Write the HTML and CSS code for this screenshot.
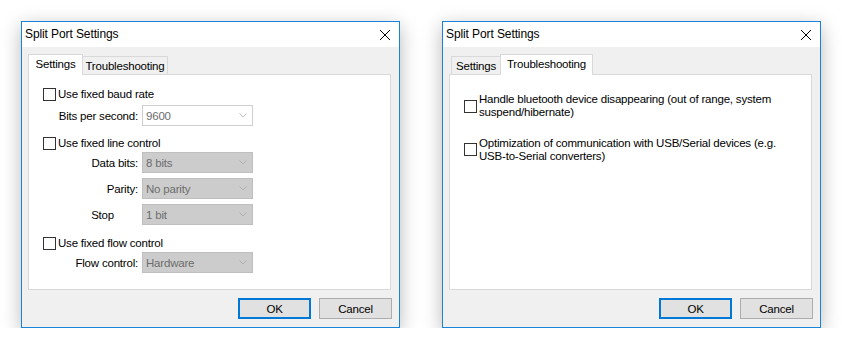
FILE: index.html
```html
<!DOCTYPE html>
<html lang="en">
<head>
    <meta charset="UTF-8">
    <title>Split Port Settings</title>
    <link rel="stylesheet" href="styles.css">
</head>
<body>
    <div class="desk">
        <div class="dialog">
            <div class="titlebar">
                <span class="title">Split Port Settings</span>
                <svg class="close" width="10" height="10" viewBox="0 0 10 10"><path d="M0 0L10 10M10 0L0 10" stroke="#000" stroke-width="1"/></svg>
            </div>
            <div class="body">
                <div class="tabs">
                    <div class="tab active settingsOn">Settings</div>
                    <div class="tab troubleOff">Troubleshooting</div>
                </div>
                <div class="panel">
                    <div class="check"><span class="box"></span><span class="label">Use fixed baud rate</span></div>
                    <div class="field first">
                        <span class="name">Bits per second:</span>
                        <div class="combo">9600<svg width="8" height="5" viewBox="0 0 8 5"><path d="M0.5 0.5L4 4L7.5 0.5" fill="none" stroke="#bdbdbd"/></svg></div>
                    </div>
                    <div class="check spaced"><span class="box"></span><span class="label">Use fixed line control</span></div>
                    <div class="field first">
                        <span class="name">Data bits:</span>
                        <div class="combo off">8 bits<svg width="8" height="5" viewBox="0 0 8 5"><path d="M0.5 0.5L4 4L7.5 0.5" fill="none" stroke="#b0b0b0"/></svg></div>
                    </div>
                    <div class="field">
                        <span class="name">Parity:</span>
                        <div class="combo off">No parity<svg width="8" height="5" viewBox="0 0 8 5"><path d="M0.5 0.5L4 4L7.5 0.5" fill="none" stroke="#b0b0b0"/></svg></div>
                    </div>
                    <div class="field">
                        <span class="name stop">Stop</span>
                        <div class="combo off">1 bit<svg width="8" height="5" viewBox="0 0 8 5"><path d="M0.5 0.5L4 4L7.5 0.5" fill="none" stroke="#b0b0b0"/></svg></div>
                    </div>
                    <div class="check spaced2"><span class="box"></span><span class="label">Use fixed flow control</span></div>
                    <div class="field first">
                        <span class="name">Flow control:</span>
                        <div class="combo off">Hardware<svg width="8" height="5" viewBox="0 0 8 5"><path d="M0.5 0.5L4 4L7.5 0.5" fill="none" stroke="#b0b0b0"/></svg></div>
                    </div>
                </div>
                <div class="buttons">
                    <button class="btn default">OK</button>
                    <button class="btn">Cancel</button>
                </div>
            </div>
        </div>

        <div class="dialog">
            <div class="titlebar">
                <span class="title">Split Port Settings</span>
                <svg class="close" width="10" height="10" viewBox="0 0 10 10"><path d="M0 0L10 10M10 0L0 10" stroke="#000" stroke-width="1"/></svg>
            </div>
            <div class="body">
                <div class="tabs">
                    <div class="tab settingsOff">Settings</div>
                    <div class="tab active troubleOn">Troubleshooting</div>
                </div>
                <div class="panel trouble">
                    <div class="multi"><span class="box"></span><span class="label">Handle bluetooth device disappearing (out of range, system<br>suspend/hibernate)</span></div>
                    <div class="multi"><span class="box"></span><span class="label">Optimization of communication with USB/Serial devices (e.g.<br>USB-to-Serial converters)</span></div>
                </div>
                <div class="buttons">
                    <button class="btn default">OK</button>
                    <button class="btn">Cancel</button>
                </div>
            </div>
        </div>
    </div>
</body>
</html>
```

FILE: styles.css
```css
* {
    box-sizing: border-box;
}
body {
    margin: 0;
    background-color: #ffffff;
    font-family: 'Liberation Sans', Arial, sans-serif;
    font-size: 11.5px;
    letter-spacing: -0.2px;
    color: #000000;
}
.desk {
    display: flex;
    gap: 42px;
    padding: 21px 0 0 21px;
}
.dialog {
    width: 379px;
    height: 307px;
    border: 1px solid #1883d7;
    background-color: #f0f0f0;
    box-shadow: 0 5px 18px rgba(0, 0, 0, 0.28);
    display: flex;
    flex-direction: column;
}
.titlebar {
    height: 25px;
    background-color: #ffffff;
    display: flex;
    align-items: center;
    justify-content: space-between;
    padding: 0 9px 0 3px;
}
.title {
    line-height: 15px;
    font-size: 12px;
    letter-spacing: -0.1px;
}
.close {
    display: block;
}
.body {
    flex: 1;
    padding: 7px 7px 8px 6px;
    display: flex;
    flex-direction: column;
}
.tabs {
    height: 20px;
    display: flex;
    align-items: flex-end;
}
.tab {
    height: 18px;
    border: 1px solid #d9d9d9;
    border-bottom: none;
    background-color: #f0f0f0;
    text-align: center;
    line-height: 15px;
    padding-top: 2px;
    white-space: nowrap;
}
.tab.active {
    height: 21px;
    margin-bottom: -1px;
    background-color: #ffffff;
    position: relative;
    z-index: 1;
}
.settingsOn {
    width: 55px;
}
.troubleOff {
    width: 86px;
    margin-left: -1px;
}
.settingsOff {
    width: 50px;
    margin-left: 2px;
}
.troubleOn {
    width: 93px;
    margin-left: -1px;
}
.panel {
    height: 216px;
    margin-right: 1px;
    border: 1px solid #d9d9d9;
    background-color: #ffffff;
    padding: 12px 0 0 14px;
}
.check {
    height: 15px;
    display: flex;
    align-items: center;
    line-height: 15px;
}
.check.spaced {
    margin-top: 10px;
}
.check.spaced2 {
    margin-top: 11px;
}
.box {
    width: 13px;
    height: 13px;
    border: 1px solid #333333;
    background-color: #ffffff;
    flex-shrink: 0;
}
.label {
    margin-left: 2px;
}
.field {
    height: 21px;
    display: flex;
    align-items: center;
    margin-top: 5px;
}
.field.first {
    margin-top: 3px;
}
.check.spaced + .field.first,
.check.spaced2 + .field.first {
    margin-top: 1px;
}
.name {
    width: 95px;
    text-align: right;
}
.name.stop {
    padding-right: 24px;
}
.combo {
    width: 111px;
    height: 21px;
    margin-left: 4px;
    border: 1px solid #cfcfcf;
    background-color: #ffffff;
    color: #6d6d6d;
    display: flex;
    align-items: center;
    justify-content: space-between;
    padding: 0 5px 0 3px;
}
.combo.off {
    background-color: #cccccc;
    border-color: #bfbfbf;
}
.combo svg {
    display: block;
}
.panel.trouble {
    padding-top: 18px;
}
.multi {
    display: flex;
    align-items: center;
    line-height: 13.3px;
    margin-bottom: 17px;
}
.buttons {
    margin-top: 8px;
    display: flex;
    justify-content: flex-end;
    gap: 8px;
}
.btn {
    width: 73px;
    height: 21px;
    border: 1px solid #adadad;
    background-color: #e1e1e1;
    font-family: 'Liberation Sans', Arial, sans-serif;
    font-size: 11.5px;
    letter-spacing: -0.2px;
    color: #000000;
    padding: 0;
}
.btn.default {
    border: 2px solid #0078d7;
}
```
